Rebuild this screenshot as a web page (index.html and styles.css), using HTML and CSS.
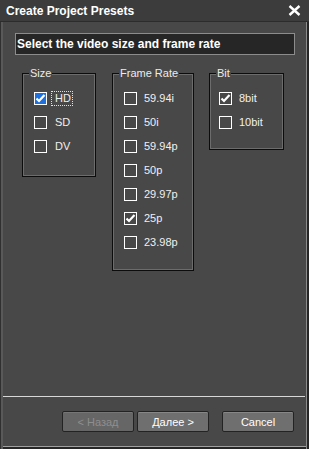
FILE: index.html
```html
<!DOCTYPE html>
<html lang="en">
<head>
    <meta charset="UTF-8">
    <meta name="viewport" content="width=device-width, initial-scale=1.0">
    <title>Create Project Presets</title>
    <link rel="stylesheet" href="styles.css">
</head>
<body>
    <div class="window">
        <!-- Barra de título -->
        <div class="titlebar">
            <span class="title">Create Project Presets</span>
            <svg class="close" width="13" height="11" viewBox="0 0 13 11">
                <path d="M1.5 1 L11.5 10 M11.5 1 L1.5 10" stroke="#fff" stroke-width="2.4" fill="none"/>
            </svg>
        </div>

        <div class="body">
            <div class="prompt">Select the video size and frame rate</div>

            <div class="groups">
                <!-- Tamaño -->
                <fieldset class="group group-size">
                    <legend>Size</legend>
                    <div class="option">
                        <span class="box box-active">
                            <svg width="11" height="11" viewBox="0 0 11 11"><path d="M1.5 5.5 L4 8 L9.5 2" stroke="#fff" stroke-width="2.2" fill="none"/></svg>
                        </span>
                        <span class="label label-focus">HD</span>
                    </div>
                    <div class="option"><span class="box"></span><span class="label">SD</span></div>
                    <div class="option"><span class="box"></span><span class="label">DV</span></div>
                </fieldset>

                <!-- Frecuencia -->
                <fieldset class="group group-rate">
                    <legend>Frame Rate</legend>
                    <div class="option"><span class="box"></span><span class="label">59.94i</span></div>
                    <div class="option"><span class="box"></span><span class="label">50i</span></div>
                    <div class="option"><span class="box"></span><span class="label">59.94p</span></div>
                    <div class="option"><span class="box"></span><span class="label">50p</span></div>
                    <div class="option"><span class="box"></span><span class="label">29.97p</span></div>
                    <div class="option">
                        <span class="box">
                            <svg width="11" height="11" viewBox="0 0 11 11"><path d="M1.5 5.5 L4 8 L9.5 2" stroke="#fff" stroke-width="2.2" fill="none"/></svg>
                        </span>
                        <span class="label">25p</span>
                    </div>
                    <div class="option"><span class="box"></span><span class="label">23.98p</span></div>
                </fieldset>

                <!-- Profundidad -->
                <fieldset class="group group-bit">
                    <legend>Bit</legend>
                    <div class="option">
                        <span class="box">
                            <svg width="11" height="11" viewBox="0 0 11 11"><path d="M1.5 5.5 L4 8 L9.5 2" stroke="#fff" stroke-width="2.2" fill="none"/></svg>
                        </span>
                        <span class="label">8bit</span>
                    </div>
                    <div class="option"><span class="box"></span><span class="label">10bit</span></div>
                </fieldset>
            </div>

            <div class="footer">
                <div class="separator"></div>
                <div class="buttons">
                    <button class="btn" disabled>&lt; Назад</button>
                    <button class="btn">Далее &gt;</button>
                    <button class="btn btn-cancel">Cancel</button>
                </div>
            </div>
        </div>
    </div>
</body>
</html>
```

FILE: styles.css
```css
body {
    margin: 0;
    background-color: #484848;
    font-family: "Liberation Sans", Arial, sans-serif;
    font-size: 11px;
    color: #f0f0f0;
}
.window {
    width: 309px;
    height: 449px;
    display: flex;
    flex-direction: column;
    background-color: #484848;
}
.titlebar {
    height: 21px;
    display: flex;
    align-items: center;
    justify-content: space-between;
    padding: 0 8px 0 6px;
    background-color: #3c3c3c;
    border-bottom: 1px solid #2c2c2c;
}
.title {
    font-size: 12px;
    font-weight: bold;
    color: #fff;
    margin-top: 1px;
}
.close {
    display: block;
}
.body {
    flex: 1;
    display: flex;
    flex-direction: column;
    padding-bottom: 17px;
    box-shadow:
        inset 1px 0 #303030,
        inset 3px 0 #595959,
        inset -2px 0 #262626,
        inset -3px 0 #8a8a8a,
        inset 0 -2px #262626,
        inset 0 -3px #a0a0a0;
}
.prompt {
    margin: 11px 14px 0 15px;
    height: 22px;
    box-sizing: border-box;
    border: 1px solid #8c8c8c;
    background-color: #262626;
    padding-left: 1px;
    line-height: 20px;
    font-size: 12px;
    font-weight: bold;
    color: #fff;
}
.groups {
    display: flex;
    align-items: flex-start;
    margin-top: 11px;
    padding-left: 22px;
}
.group {
    margin: 0;
    min-width: 0;
    box-sizing: border-box;
    border: 1px solid #0c0c0c;
    box-shadow: inset 0 0 0 1px #6c6c6c;
    padding: 6px 0 0 6px;
}
.group legend {
    padding: 0 1px;
    line-height: 14px;
    background-color: #484848;
    color: #ececec;
}
.group-size {
    width: 74px;
    height: 111px;
}
.group-rate {
    width: 82px;
    height: 205px;
    margin-left: 16px;
}
.group-bit {
    width: 75px;
    height: 84px;
    margin-left: 15px;
}
.option {
    height: 24px;
    display: flex;
    align-items: center;
    padding-left: 5px;
}
.group-bit .option {
    padding-left: 3px;
}
.box {
    width: 13px;
    height: 13px;
    box-sizing: border-box;
    border: 1px solid #fff;
    display: flex;
    align-items: center;
    justify-content: center;
    flex-shrink: 0;
}
.box-active {
    background-color: #1f6fdc;
}
.box svg {
    display: block;
}
.label {
    margin-left: 4px;
    padding: 0 1px 0 3px;
    border: 1px solid transparent;
    line-height: 13px;
    white-space: nowrap;
}
.group-rate .label,
.group-bit .label {
    margin-left: 3px;
}
.label-focus {
    border: 1px dotted #e0e0e0;
}
.footer {
    margin-top: auto;
    padding: 0 4px 0 3px;
}
.separator {
    border-top: 1px solid #d8d8d8;
}
.buttons {
    display: flex;
    justify-content: flex-end;
    gap: 3px;
    margin-top: 14px;
    padding-right: 11px;
}
.btn {
    width: 72px;
    height: 21px;
    padding: 0;
    font-family: "Liberation Sans", Arial, sans-serif;
    font-size: 11px;
    color: #fff;
    background-color: #6f6f6f;
    border: 1px solid #232323;
    border-radius: 2px;
    box-shadow: inset 0 1px #878787;
}
.btn:disabled {
    color: #8e8e8e;
    background-color: #666;
    box-shadow: inset 0 1px #767676;
}
.btn-cancel {
    margin-left: 10px;
}
```
